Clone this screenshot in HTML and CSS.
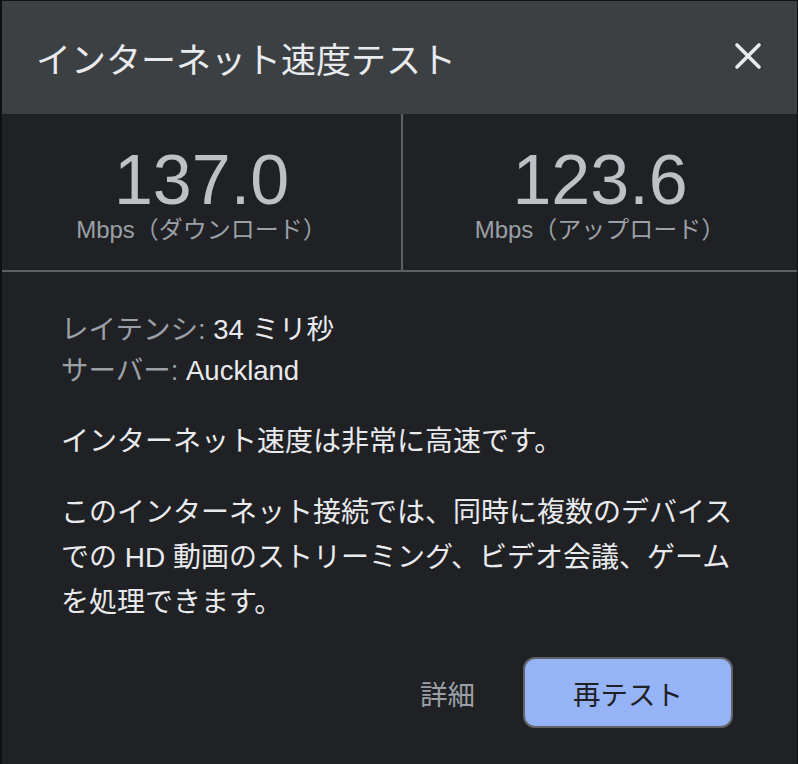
FILE: index.html
```html
<!DOCTYPE html>
<html lang="ja">
<head>
  <meta charset="UTF-8">
  <meta name="viewport" content="width=device-width, initial-scale=1.0">
  <title>インターネット速度テスト</title>
  <link rel="stylesheet" href="styles.css">
</head>
<body>

  <div class="dialog">
    <div class="dialog-header">
      <h1 class="dialog-title">インターネット速度テスト</h1>
      <button class="close-btn" aria-label="閉じる">
        <svg width="28" height="28" viewBox="0 0 28 28">
          <path d="M3 3 L25 25 M25 3 L3 25" stroke="#e8eaed" stroke-width="3.6" stroke-linecap="round" fill="none"/>
        </svg>
      </button>
    </div>

    <div class="stats">
      <div class="stat">
        <div class="stat-value">137.0</div>
        <div class="stat-unit">Mbps（ダウンロード）</div>
      </div>
      <div class="stat">
        <div class="stat-value">123.6</div>
        <div class="stat-unit">Mbps（アップロード）</div>
      </div>
    </div>

    <div class="details">
      <div class="meta">
        <div><span class="meta-label">レイテンシ:</span> 34 ミリ秒</div>
        <div><span class="meta-label">サーバー:</span> Auckland</div>
      </div>
      <p class="summary">インターネット速度は非常に高速です。</p>
      <p class="summary">このインターネット接続では、同時に複数のデバイスでの HD 動画のストリーミング、ビデオ会議、ゲームを処理できます。</p>
      <div class="actions">
        <button class="link-btn">詳細</button>
        <button class="primary-btn">再テスト</button>
      </div>
    </div>
  </div>

</body>
</html>
```

FILE: styles.css
```css
* {
  box-sizing: border-box;
}

body {
  margin: 0;
  background-color: #202124;
  font-family: "Liberation Sans", "Noto Sans CJK JP", sans-serif;
  color: #e8eaed;
}

.dialog {
  width: 798px;
  height: 764px;
  background-color: #202124;
  border-top: 1px solid #111214;
  border-left: 2px solid #0f1011;
  border-right: 1px solid #111214;
}

.dialog-header {
  display: flex;
  align-items: center;
  justify-content: space-between;
  height: 113px;
  padding: 0 35px 0 34px;
  background-color: #3c4043;
}

.dialog-title {
  margin: 0;
  font-size: 35px;
  font-weight: normal;
  color: #e8eaed;
}

.close-btn {
  display: flex;
  padding: 0;
  margin-bottom: 4px;
  border: none;
  background: none;
  cursor: pointer;
}

.stats {
  display: grid;
  grid-template-columns: 401px 1fr;
  border-bottom: 2px solid #5c5f63;
}

.stat {
  display: flex;
  flex-direction: column;
  align-items: center;
  padding: 31px 0 25px;
}

.stat:first-child {
  border-right: 2px solid #5c5f63;
}

.stat-value {
  font-size: 70px;
  line-height: 70px;
  color: #bdc1c6;
}

.stat-unit {
  font-size: 24px;
  line-height: 30px;
  color: #9aa0a6;
}

.details {
  padding: 37px 56px 0 59px;
  font-size: 28px;
}

.meta {
  font-size: 27.5px;
  line-height: 41px;
}

.meta-label {
  color: #9aa0a6;
}

.summary {
  margin: 28px 0 0;
  line-height: 45px;
}

.summary + .summary {
  margin-top: 26px;
}

.actions {
  display: flex;
  justify-content: flex-end;
  align-items: center;
  gap: 48px;
  margin: 32px 8px 0 0;
  font-size: 27.5px;
}

.link-btn {
  padding: 0;
  border: none;
  background: none;
  font: inherit;
  color: #9aa0a6;
  cursor: pointer;
}

.primary-btn {
  width: 210px;
  height: 71px;
  border: 2px solid #5f6368;
  border-radius: 12px;
  background-color: #96b3f6;
  font: inherit;
  color: #202124;
  cursor: pointer;
}
```
